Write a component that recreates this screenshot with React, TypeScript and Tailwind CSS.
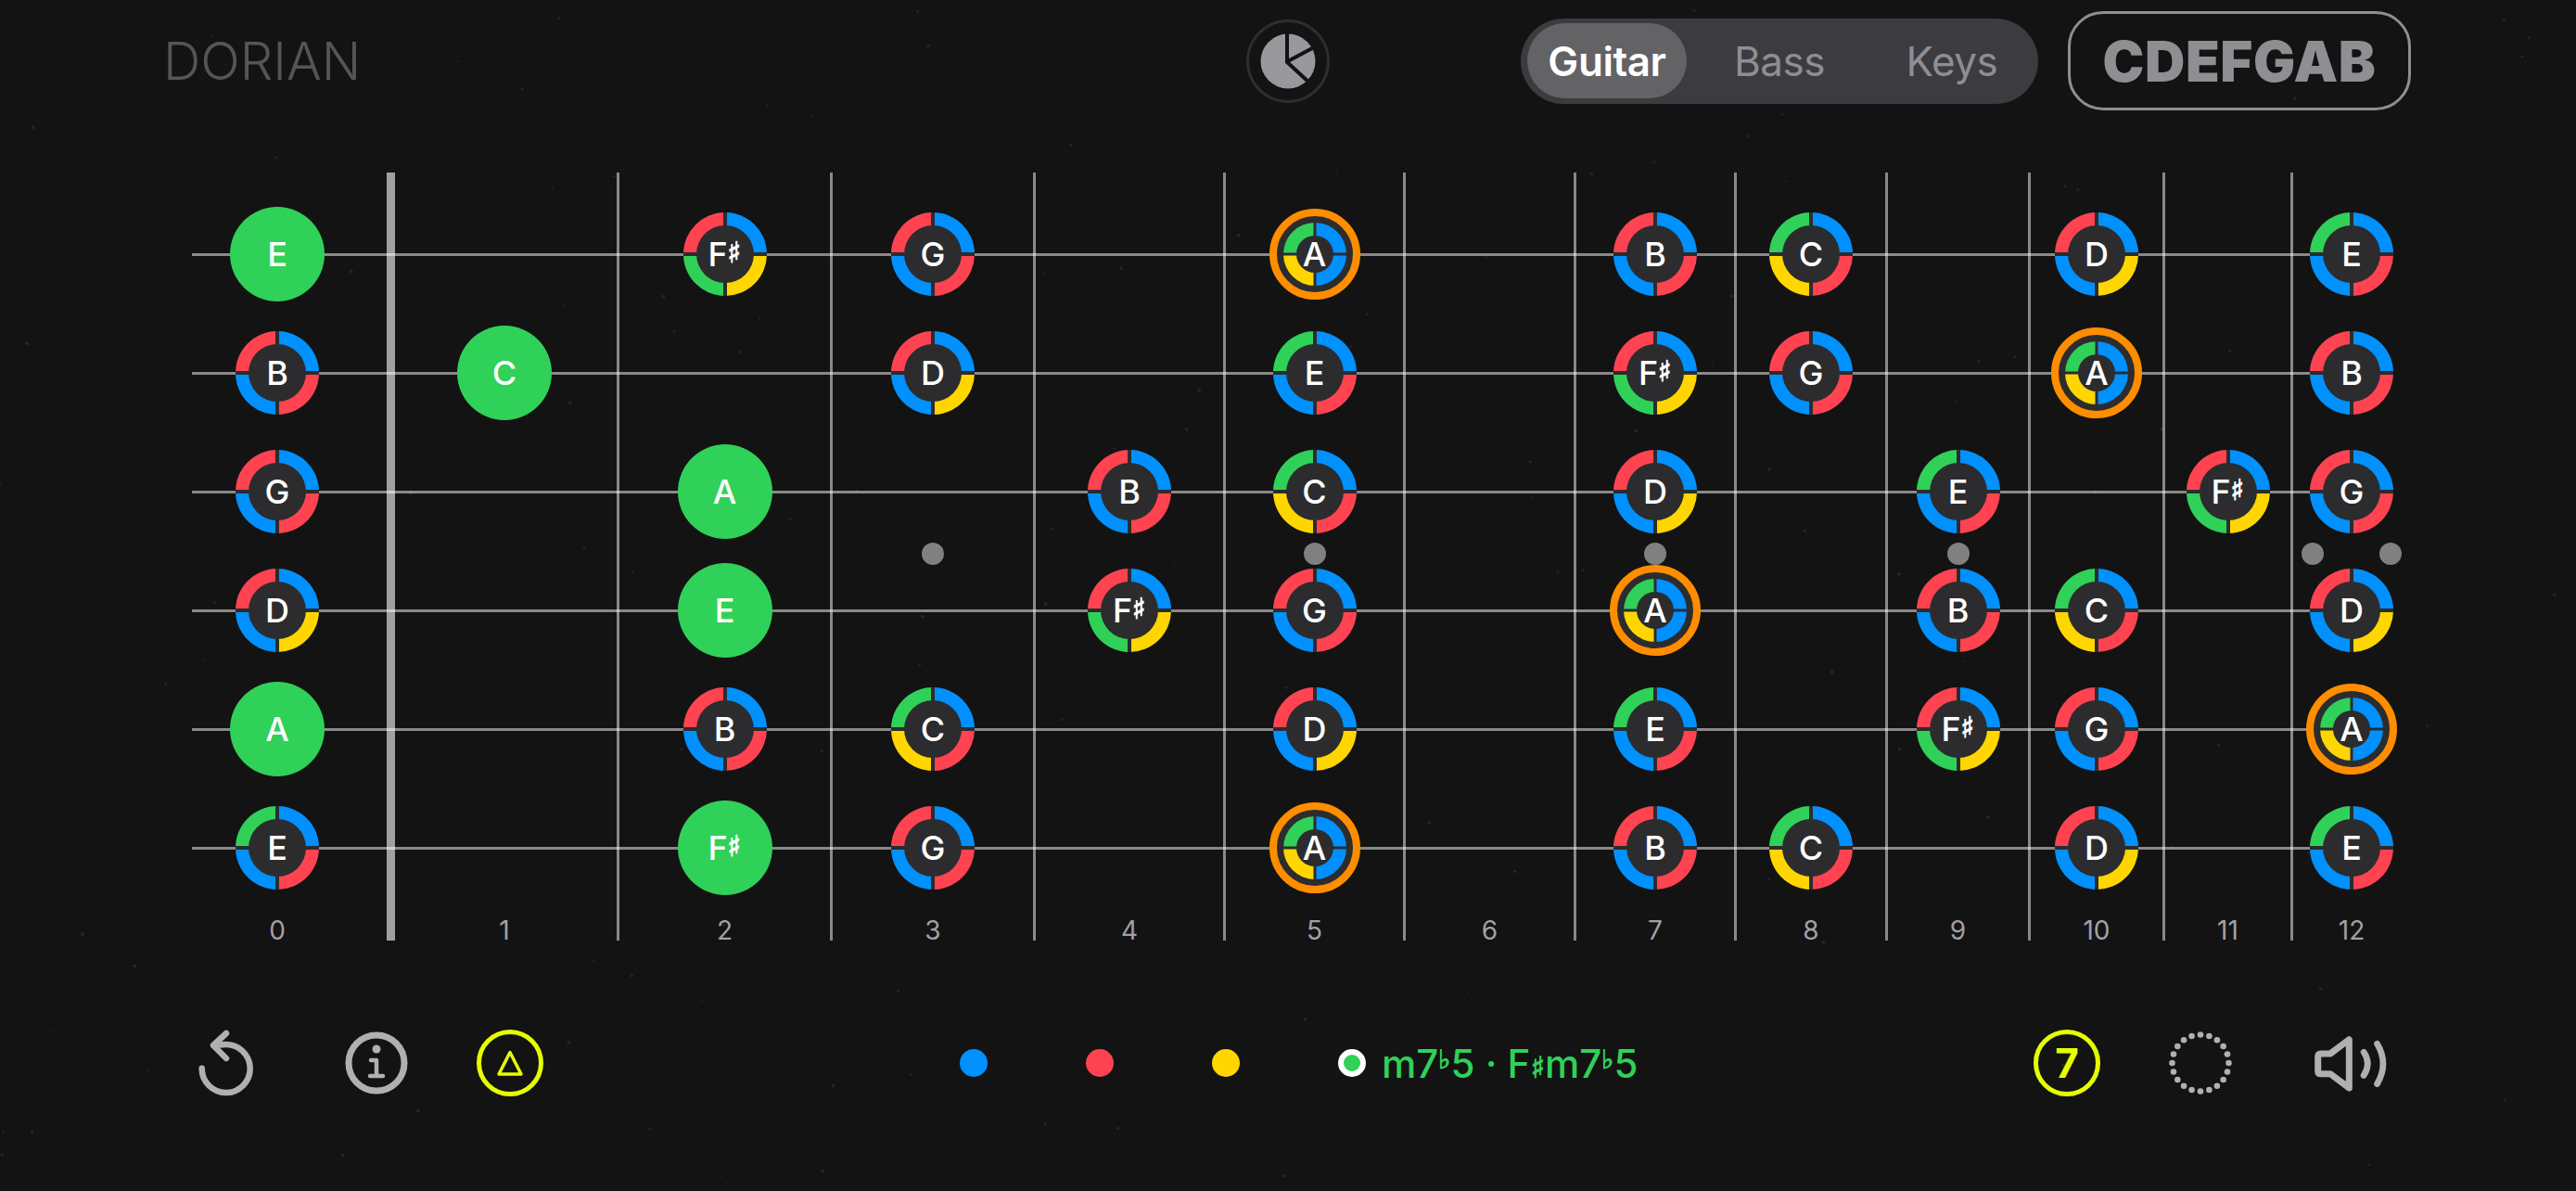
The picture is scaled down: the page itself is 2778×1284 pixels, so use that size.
const BLUE = "#0091ff";
const RED = "#ff4350";
const YELLOW = "#ffd600";
const GREEN = "#30d158";
const DARK = "#2c2c2e";

const rings: Record<string, string[]> = {
    // top-left, top-right, bottom-right, bottom-left
    E: [GREEN, BLUE, RED, BLUE],
    B: [RED, BLUE, RED, BLUE],
    G: [RED, BLUE, RED, BLUE],
    D: [RED, BLUE, YELLOW, BLUE],
    C: [GREEN, BLUE, RED, YELLOW],
    "F#": [RED, BLUE, YELLOW, GREEN],
    A: [GREEN, BLUE, BLUE, YELLOW],
};

const columns = [
    { fret: 0, cls: "w-[247px] pl-[2px] border-r-[9px] border-white/60" },
    { fret: 1, cls: "w-[242px] pr-[3px] border-r-[3px] border-white/50" },
    { fret: 2, cls: "w-[230px] border-r-[3px] border-white/50" },
    { fret: 3, cls: "w-[219px] border-r-[3px] border-white/50" },
    { fret: 4, cls: "w-[205px] border-r-[3px] border-white/50" },
    { fret: 5, cls: "w-[194px] border-r-[3px] border-white/50" },
    { fret: 6, cls: "w-[184px] border-r-[3px] border-white/50" },
    { fret: 7, cls: "w-[173px] border-r-[3px] border-white/50" },
    { fret: 8, cls: "w-[163px] border-r-[3px] border-white/50" },
    { fret: 9, cls: "w-[154px] border-r-[3px] border-white/50" },
    { fret: 10, cls: "w-[145px] border-r-[3px] border-white/50" },
    { fret: 11, cls: "w-[138px] border-r-[3px] border-white/50" },
    { fret: 12, cls: "w-[126px]" },
];

// one row per string, one slot per fret, * is a root note
const board = [
    ["E*", "", "F#", "G", "", "A", "", "B", "C", "", "D", "", "E"],
    ["B", "C*", "", "D", "", "E", "", "F#", "G", "", "A", "", "B"],
    ["G", "", "A*", "", "B", "C", "", "D", "", "E", "", "F#", "G"],
    ["D", "", "E*", "", "F#", "G", "", "A", "", "B", "C", "", "D"],
    ["A*", "", "B", "C", "", "D", "", "E", "", "F#", "G", "", "A"],
    ["E", "", "F#*", "G", "", "A", "", "B", "C", "", "D", "", "E"],
];

function sector(cx: number, cy: number, outer: number, inner: number, quadrant: number) {
    const signX = quadrant === 0 || quadrant === 3 ? -1 : 1;
    const signY = quadrant === 0 || quadrant === 1 ? -1 : 1;
    const sweep = signX * signY > 0 ? 1 : 0;
    return `M${cx + signX * outer} ${cy} A${outer} ${outer} 0 0 ${sweep} ${cx} ${cy + signY * outer} L${cx} ${cy + signY * inner} A${inner} ${inner} 0 0 ${1 - sweep} ${cx + signX * inner} ${cy} Z`;
}

function NoteName({ name }: { name: string }) {
    const letter = name[0];
    const sharp = name.includes("#");
    return (
        <span className="absolute inset-0 flex items-center justify-center text-white text-[36px] font-medium leading-none font-['Inter',sans-serif]">
            {letter}
            {sharp && <span className="text-[31px] font-bold -translate-y-[2px] font-['DejaVu_Sans',sans-serif] [-webkit-text-stroke:1px_white]">♯</span>}
        </span>
    );
}

function RingNote({ name }: { name: string }) {
    const colors = rings[name];
    return (
        <div className="relative w-[90px] h-[90px]">
            <svg width="90" height="90" viewBox="0 0 90 90" className="block">
                <circle cx="45" cy="45" r="45" fill={DARK} />
                {colors.map((color, i) => (
                    <path key={i} d={sector(45, 45, 45, 31, i)} fill={color} />
                ))}
                <rect x="43" y="0" width="4" height="90" fill={DARK} />
                <rect x="0" y="43" width="90" height="4" fill={DARK} />
            </svg>
            <NoteName name={name} />
        </div>
    );
}

function TargetNote({ name }: { name: string }) {
    const colors = rings[name];
    return (
        <div className="relative w-[98px] h-[98px]">
            <svg width="98" height="98" viewBox="0 0 98 98" className="block">
                <circle cx="49" cy="49" r="45" fill={DARK} stroke="#ff8d00" strokeWidth="8" />
                {colors.map((color, i) => (
                    <path key={i} d={sector(49, 49, 34, 20, i)} fill={color} />
                ))}
                <rect x="47.5" y="15" width="3" height="68" fill={DARK} />
                <rect x="15" y="47.5" width="68" height="3" fill={DARK} />
            </svg>
            <NoteName name={name} />
        </div>
    );
}

function RootNote({ name }: { name: string }) {
    return (
        <div className="relative w-[102px] h-[102px] rounded-full bg-[#30d158]">
            <NoteName name={name} />
        </div>
    );
}

function Note({ value }: { value: string }) {
    if (value.endsWith("*")) return <RootNote name={value.slice(0, -1)} />;
    if (value === "A") return <TargetNote name={value} />;
    return <RingNote name={value} />;
}

function Specks() {
    const specks: { x: number; y: number; r: number }[] = [];
    let seed = 91;
    const next = () => {
        seed = (seed * 16807) % 2147483647;
        return seed / 2147483647;
    };
    for (let i = 0; i < 150; i++) {
        specks.push({ x: next() * 2778, y: next() * 1284, r: 0.7 + next() * 1.3 });
    }
    return (
        <svg width="2778" height="1284" className="absolute inset-0 pointer-events-none">
            {specks.map((s, i) => (
                <circle key={i} cx={s.x} cy={s.y} r={s.r} fill="#262626" />
            ))}
        </svg>
    );
}

function Fretboard() {
    return (
        <section className="relative ml-[179px] mt-[67px] flex h-[828px]">
            <div className="absolute left-[28px] top-[87px] w-[2329px] flex flex-col gap-[125px]">
                {board.map((_, i) => (
                    <span key={i} className="block h-[3px] bg-white/50" />
                ))}
            </div>
            {columns.map((col, c) => (
                <div key={col.fret} className={`${col.cls} box-border h-full pt-[24px] flex flex-col`}>
                    {board.map((row, s) => (
                        <div key={s} className="relative h-[128px] flex items-center justify-center">
                            {s === 2 && [3, 5, 7, 9].includes(c) && (
                                <span className="absolute top-[119px] left-1/2 -translate-x-1/2 w-[24px] h-[24px] rounded-full bg-[#808080]" />
                            )}
                            {s === 2 && c === 12 && (
                                <span className="absolute top-[119px] left-1/2 -translate-x-1/2 flex gap-[60px]">
                                    <span className="w-[24px] h-[24px] rounded-full bg-[#808080]" />
                                    <span className="w-[24px] h-[24px] rounded-full bg-[#808080]" />
                                </span>
                            )}
                            {row[c] && <Note value={row[c]} />}
                        </div>
                    ))}
                    <p className="h-[36px] text-center text-[28px] leading-[50px] text-[#a1a1a6] font-['Inter',sans-serif]">
                        {col.fret}
                    </p>
                </div>
            ))}
        </section>
    );
}

function PieIcon() {
    return (
        <svg width="90" height="90" viewBox="-45 -45 90 90" className="ml-[956px] shrink-0">
            <circle r="43.5" fill="none" stroke="#2e2e30" strokeWidth="3" />
            <circle r="29.5" fill="#98989d" />
            <path d="M-1 -32V2" stroke="#131313" strokeWidth="4" fill="none" />
            <path d="M-2 1L28 -15" stroke="#131313" strokeWidth="4" fill="none" />
            <path d="M-2 0L24 24" stroke="#131313" strokeWidth="4" fill="none" />
        </svg>
    );
}

function Header() {
    return (
        <header className="flex items-center h-[107px] mt-[12px] pl-[176px] font-['Inter',sans-serif]">
            <h1 className="w-[212px] text-[56px] font-light leading-none text-[#555557]">DORIAN</h1>
            <PieIcon />
            <nav className="ml-[206px] flex items-center gap-[14px] h-[92px] w-[558px] px-[7px] rounded-full bg-[#3c3c40] text-[44px] tracking-[-0.01em]">
                <span className="flex items-center justify-center w-[172px] h-[81px] rounded-full bg-[#636366] text-white font-semibold">Guitar</span>
                <span className="flex items-center justify-center w-[172px] h-[81px] text-[#8e8e93]">Bass</span>
                <span className="flex items-center justify-center w-[172px] h-[81px] text-[#8e8e93]">Keys</span>
            </nav>
            <button className="ml-[32px] w-[370px] h-[107px] rounded-[38px] border-[3px] border-[#8e8e93] text-[#8e8e93] text-[60px] font-black tracking-[0.01em]">
                CDEFGAB
            </button>
        </header>
    );
}

function ResetIcon() {
    return (
        <svg width="70" height="80" viewBox="60 45 70 80" className="ml-[210px] shrink-0 -translate-y-[1px]">
            <path d="M67.7 91.7A26 26 0 1 0 93 66L81 67" fill="none" stroke="#b0b0b0" strokeWidth="6.5" strokeLinecap="round" />
            <path d="M94 54L80 67L94 81" fill="none" stroke="#b0b0b0" strokeWidth="6.5" strokeLinecap="round" strokeLinejoin="round" />
        </svg>
    );
}

function InfoIcon() {
    return (
        <svg width="68" height="68" viewBox="0 0 68 68" className="ml-[92px] shrink-0">
            <circle cx="34" cy="34" r="30" fill="none" stroke="#b0b0b0" strokeWidth="7" />
            <circle cx="34" cy="19" r="4.5" fill="#b0b0b0" />
            <path d="M28 31H34V48M27 48H41" fill="none" stroke="#b0b0b0" strokeWidth="4.5" strokeLinecap="round" strokeLinejoin="round" />
        </svg>
    );
}

function DottedCircle() {
    const dots = Array.from({ length: 20 }, (_, i) => (i * Math.PI) / 10);
    return (
        <svg width="68" height="68" viewBox="-34 -34 68 68" className="ml-[74px] shrink-0">
            {dots.map((a, i) => (
                <circle key={i} cx={Math.sin(a) * 30.5} cy={-Math.cos(a) * 30.5} r="3.3" fill="#b0b0b0" />
            ))}
        </svg>
    );
}

function SpeakerIcon() {
    return (
        <svg width="84" height="64" viewBox="1030 100 250 190" className="ml-[86px] shrink-0">
            <path d="M1050 175Q1050 165 1060 165L1090 165L1150 120V275L1090 230L1060 230Q1050 230 1050 220Z" fill="none" stroke="#b0b0b0" strokeWidth="21" strokeLinejoin="round" />
            <path d="M1197 160Q1222 197 1197 235M1240 133Q1278 197 1240 262" fill="none" stroke="#b0b0b0" strokeWidth="20" strokeLinecap="round" />
        </svg>
    );
}

function Footer() {
    return (
        <footer className="flex items-center h-[72px] mt-[96px] font-['Inter',sans-serif]">
            <ResetIcon />
            <InfoIcon />
            <span className="ml-[74px] flex items-center justify-center w-[72px] h-[72px] rounded-full border-[5px] border-[#e6ff00]">
                <svg width="30" height="30" viewBox="0 0 30 30">
                    <path d="M15 3.5L27 27H3Z" fill="none" stroke="#e6ff00" strokeWidth="3.5" strokeLinejoin="round" />
                </svg>
            </span>
            <span className="ml-[449px] w-[30px] h-[30px] rounded-full bg-[#0091ff]" />
            <span className="ml-[106px] w-[30px] h-[30px] rounded-full bg-[#ff4350]" />
            <span className="ml-[106px] w-[30px] h-[30px] rounded-full bg-[#ffd600]" />
            <span className="ml-[106px] w-[30px] h-[30px] rounded-full border-[6px] border-white bg-[#30d158]" />
            <p className="ml-[17px] w-[300px] whitespace-nowrap text-[42px] font-medium text-[#30d158]">
                m7<sup className="text-[28px] font-bold font-['DejaVu_Sans',sans-serif] top-[-0.35em] [-webkit-text-stroke:1px_#30d158]">♭</sup>5 · F<span className="text-[32px] font-bold font-['DejaVu_Sans',sans-serif] [-webkit-text-stroke:1px_#30d158]">♯</span>m7<sup className="text-[28px] font-bold font-['DejaVu_Sans',sans-serif] top-[-0.35em] [-webkit-text-stroke:1px_#30d158]">♭</sup>5
            </p>
            <span className="ml-[403px] flex items-center justify-center w-[72px] h-[72px] rounded-full border-[5px] border-[#e6ff00] text-[#e6ff00] text-[44px] font-bold">
                7
            </span>
            <DottedCircle />
            <SpeakerIcon />
        </footer>
    );
}

export default function App() {
    return (
        <main className="relative w-[2778px] h-[1284px] overflow-hidden bg-[#131313]">
            <Specks />
            <div className="relative flex flex-col">
                <Header />
                <Fretboard />
                <Footer />
            </div>
        </main>
    );
}
